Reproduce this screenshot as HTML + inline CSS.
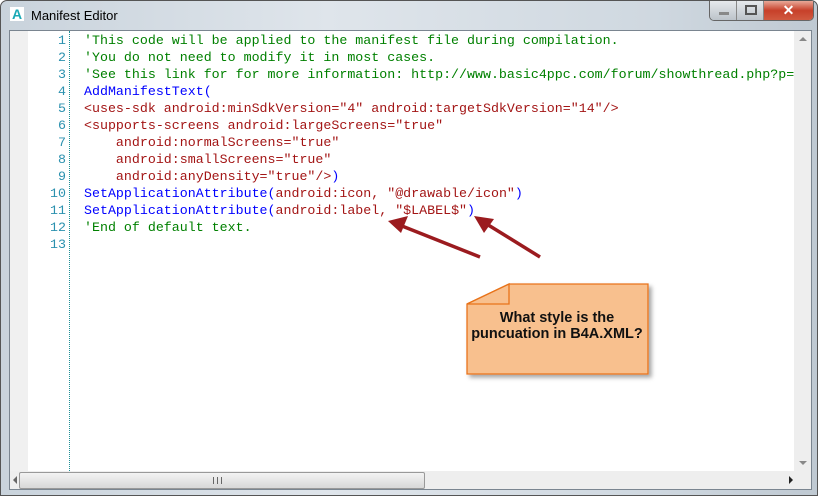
<!DOCTYPE html>
<html><head><style>
body{margin:0;width:818px;height:496px;overflow:hidden;background:#fff;font-family:"Liberation Sans",sans-serif;}
.frame{position:absolute;left:0;top:0;width:816px;height:494px;border:1px solid #555;border-radius:7px 7px 0 0;background:linear-gradient(90deg,#c9d3dc,#dfe5eb 40%,#cfd8e0 80%,#bfc9d2);}
.title{position:absolute;left:30px;top:7px;font-size:13px;color:#000;}
.client{position:absolute;left:8px;top:29px;width:801px;height:458px;border:1px solid #7a8590;background:#fff;}
.gut{position:absolute;left:0;top:0;width:18px;height:440px;background:#f0f0f0;}
.code{position:absolute;left:0;top:1px;font-family:"Liberation Mono",monospace;font-size:13.3px;line-height:17px;white-space:pre;}
.ln{position:absolute;left:18px;width:38px;text-align:right;color:#2b91af;}
.c{color:#008000}.b{color:#0000ff}.r{color:#a31515}
.vs{position:absolute;right:0;top:0;width:17px;height:440px;background:#eee;}
.hs{position:absolute;left:0;top:440px;width:801px;height:18px;background:#eee;}
.thumb{position:absolute;left:9px;top:1px;width:404px;height:15px;border:1px solid #999;border-radius:2px;background:linear-gradient(#f3f3f3,#d8d8d8);}
</style></head><body>
<div class="frame">
<div style="position:absolute;left:9px;top:6px;width:14px;height:14px;background:#fff;color:#1aa9b5;font-weight:bold;font-size:14px;line-height:14px;text-align:center">A</div>
<div class="title">Manifest Editor</div>
<div style="position:absolute;left:708px;top:0;width:103px;height:19px;border:1px solid #666;border-top:none;border-radius:0 0 5px 5px;overflow:hidden;display:flex">
<div style="width:26px;background:linear-gradient(#e6e9ec,#bcc3ca);border-right:1px solid #888;position:relative"><div style="position:absolute;left:9px;top:11px;width:10px;height:3px;background:#888"></div></div>
<div style="width:26px;background:linear-gradient(#e6e9ec,#bcc3ca);border-right:1px solid #888;position:relative"><div style="position:absolute;left:8px;top:4px;width:8px;height:6px;border:2px solid #555"></div></div>
<div style="flex:1;background:linear-gradient(#e8a898,#c7402a 50%,#d05a40);color:#fff;font-weight:bold;text-align:center;font-size:14px;line-height:18px">✕</div>
</div>
<div class="client">
<div class="gut"></div>
<div style="position:absolute;left:59px;top:0;height:440px;border-left:1px dotted #1f8f96"></div>
<div class="code"><div class="ln">1
2
3
4
5
6
7
8
9
10
11
12
13</div><div style="position:absolute;left:74px"><span class="c">'This code will be applied to the manifest file during compilation.
'You do not need to modify it in most cases.
'See this link for for more information: http://www.basic4ppc.com/forum/showthread.php?p=</span>
<span class="b">AddManifestText(</span>
<span class="r">&lt;uses-sdk android:minSdkVersion="4" android:targetSdkVersion="14"/&gt;
&lt;supports-screens android:largeScreens="true"
    android:normalScreens="true"
    android:smallScreens="true"
    android:anyDensity="true"/&gt;</span><span class="b">)</span>
<span class="b">SetApplicationAttribute(</span><span class="r">android:icon, "@drawable/icon"</span><span class="b">)</span>
<span class="b">SetApplicationAttribute(</span><span class="r">android:label, "$LABEL$"</span><span class="b">)</span>
<span class="c">'End of default text.</span>
</div></div>
<div class="vs"><div style="position:absolute;left:5px;top:6px;border:4px solid transparent;border-bottom:4px solid #888;border-top:none"></div><div style="position:absolute;left:5px;bottom:6px;border:4px solid transparent;border-top:4px solid #888;border-bottom:none"></div></div>
<div class="hs"><div style="position:absolute;left:3px;top:5px;border:4px solid transparent;border-right:4px solid #666;border-left:none"></div><div class="thumb"><div style="position:absolute;left:193px;top:4px;width:7px;height:7px;border-left:1px solid #666;border-right:1px solid #666"><div style="margin-left:3px;width:1px;height:7px;background:#666"></div></div></div><div style="position:absolute;left:779px;top:5px;border:4px solid transparent;border-left:4px solid #222;border-right:none"></div><div style="position:absolute;left:784px;top:0;width:17px;height:18px;background:#eee"></div></div>
</div>
</div>
<svg style="position:absolute;left:0;top:0" width="818" height="496">
<defs><filter id="s"><feDropShadow dx="3" dy="3" stdDeviation="2" flood-color="#000" flood-opacity="0.35"/></filter></defs>
<g stroke="#9b1b1f" stroke-width="3.5" fill="#9b1b1f">
<line x1="480" y1="257" x2="402" y2="226"/><polygon points="388,221 408,216 401,233" stroke="none"/>
<line x1="540" y1="257" x2="485" y2="223"/><polygon points="474,216 494,219 484,233" stroke="none"/>
</g>
<path d="M467,304 L509,284 L648,284 L648,374 L467,374 Z" fill="#f8c08e" stroke="#e8731a" stroke-width="1.3" filter="url(#s)"/>
<path d="M467,304 L509,284 L509,304 Z" fill="#f8c08e" stroke="#e8731a" stroke-width="1.3"/>
<text x="557" y="322" font-family="Liberation Sans" font-weight="bold" font-size="14.5" text-anchor="middle" fill="#111">What style is the</text>
<text x="557" y="338" font-family="Liberation Sans" font-weight="bold" font-size="14.5" text-anchor="middle" fill="#111">puncuation in B4A.XML?</text>
</svg>
</body></html>
